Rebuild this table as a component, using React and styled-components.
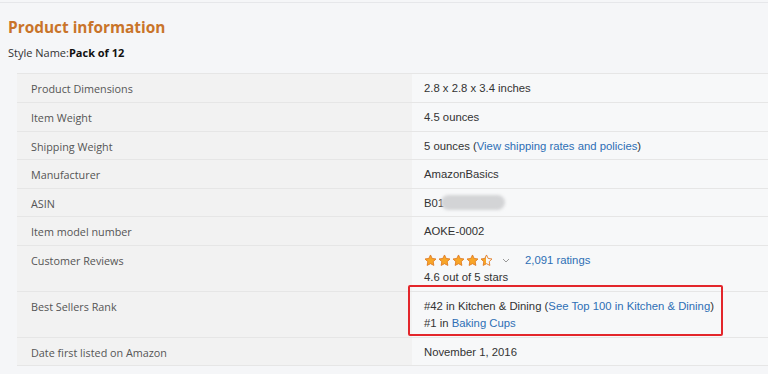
import React from "react";
import styled, { createGlobalStyle } from "styled-components";

const Global = createGlobalStyle`
  html, body { margin: 0; padding: 0; background: #f5f6f8; }
  body { font-family: "Open Sans", "Noto Sans", Arial, sans-serif; }
`;

const Page = styled.div`
  width: 768px;
  height: 374px;
  overflow: hidden;
  padding-top: 2px;
  box-sizing: border-box;
`;

const TopRule = styled.div`
  border-top: 1px solid #e6e7ea;
`;

const Section = styled.section`
  padding: 14px 0 0 8px;
`;

const Heading = styled.h2`
  margin: 0;
  font-family: "Open Sans", "Noto Sans", sans-serif;
  font-weight: 700;
  font-size: 15.4px;
  line-height: 21px;
  color: #c9742a;
`;

const StyleLine = styled.div`
  margin-top: 7px;
  font-size: 11px;
  line-height: 16px;
  color: #333;
  b { font-weight: 700; color: #111; }
`;

const Table = styled.div`
  margin-top: 12px;
  margin-left: 17px;
  border-top: 1px solid #e6e6e6;
`;

const Row = styled.div`
  display: grid;
  grid-template-columns: 395px 1fr;
  height: ${(p) => p.$h}px;
  border-bottom: 1px solid #e6e6e6;
  box-sizing: border-box;
`;

const Label = styled.div`
  background: #f2f2f2;
  padding: 6px 0 0 14px;
  font-family: "Open Sans", "Noto Sans", sans-serif;
  font-size: 10.8px;
  line-height: 17px;
  color: #555;
`;

const Value = styled.div`
  position: relative;
  background: #f7f8f9;
  padding: 6px 0 0 12px;
  font-family: "Liberation Sans", Arial, sans-serif;
  font-size: 11.3px;
  line-height: 17px;
  color: #333;
  white-space: nowrap;
`;

const Link = styled.a`
  color: #2e6fb5;
  text-decoration: none;
`;

const Blur = styled.span`
  display: inline-block;
  vertical-align: middle;
  width: 64px;
  height: 15px;
  margin-left: -3px;
  margin-top: -3px;
  border-radius: 8px;
  background: #d3d4d6;
  filter: blur(1.5px);
`;

const StarsLine = styled.div`
  display: flex;
  align-items: center;
  height: 17px;
`;

const Stars = styled.span`
  display: inline-flex;
  gap: 1px;
`;

const Chevron = styled.svg`
  margin-left: 9px;
  margin-right: 15px;
`;

const Highlight = styled.div`
  position: absolute;
  left: -4px;
  top: -7px;
  width: 315px;
  height: 51px;
  border: 2px solid #e3262b;
  border-radius: 2px;
  box-sizing: border-box;
  pointer-events: none;
`;

const STAR = "M12 1.8l3.1 6.4 7 1-5.1 4.9 1.2 7-6.2-3.3-6.2 3.3 1.2-7L1.9 9.2l7-1z";

function Star({ half }) {
  return (
    <svg width="13" height="13" viewBox="0 0 24 24">
      <defs>
        <linearGradient id="hf" x1="0" x2="1" y1="0" y2="0">
          <stop offset="0.45" stopColor="#f8a628" />
          <stop offset="0.45" stopColor="#ffffff" stopOpacity="0" />
        </linearGradient>
      </defs>
      <path
        d={STAR}
        fill={half ? "url(#hf)" : "#f8a628"}
        stroke="#de7921"
        strokeWidth="1.6"
        strokeLinejoin="round"
      />
    </svg>
  );
}

const rows = [
  { label: "Product Dimensions", value: "2.8 x 2.8 x 3.4 inches", h: 29 },
  { label: "Item Weight", value: "4.5 ounces", h: 29 },
  {
    label: "Shipping Weight",
    value: (
      <>
        5 ounces (<Link href="#">View shipping rates and policies</Link>)
      </>
    ),
    h: 28,
  },
  { label: "Manufacturer", value: "AmazonBasics", h: 29 },
  {
    label: "ASIN",
    value: (
      <>
        B01<Blur />
      </>
    ),
    h: 28,
  },
  { label: "Item model number", value: "AOKE-0002", h: 29 },
  {
    label: "Customer Reviews",
    value: (
      <>
        <StarsLine>
          <Stars>
            <Star />
            <Star />
            <Star />
            <Star />
            <Star half />
          </Stars>
          <Chevron width="8" height="5" viewBox="0 0 8 5">
            <polyline points="1,1 4,4 7,1" fill="none" stroke="#999" strokeWidth="1" />
          </Chevron>
          <Link href="#">2,091 ratings</Link>
        </StarsLine>
        <div>4.6 out of 5 stars</div>
      </>
    ),
    h: 46,
  },
  {
    label: "Best Sellers Rank",
    value: (
      <>
        <Highlight />
        <div>
          #42 in Kitchen &amp; Dining (
          <Link href="#">See Top 100 in Kitchen &amp; Dining</Link>)
        </div>
        <div>
          #1 in <Link href="#">Baking Cups</Link>
        </div>
      </>
    ),
    h: 46,
  },
  { label: "Date first listed on Amazon", value: "November 1, 2016", h: 28 },
];

export default function App() {
  return (
    <Page>
      <Global />
      <TopRule />
      <Section>
        <Heading>Product information</Heading>
        <StyleLine>
          Style Name:<b>Pack of 12</b>
        </StyleLine>
      </Section>
      <Table>
        {rows.map((r) => (
          <Row key={r.label} $h={r.h}>
            <Label>{r.label}</Label>
            <Value>{r.value}</Value>
          </Row>
        ))}
      </Table>
    </Page>
  );
}
